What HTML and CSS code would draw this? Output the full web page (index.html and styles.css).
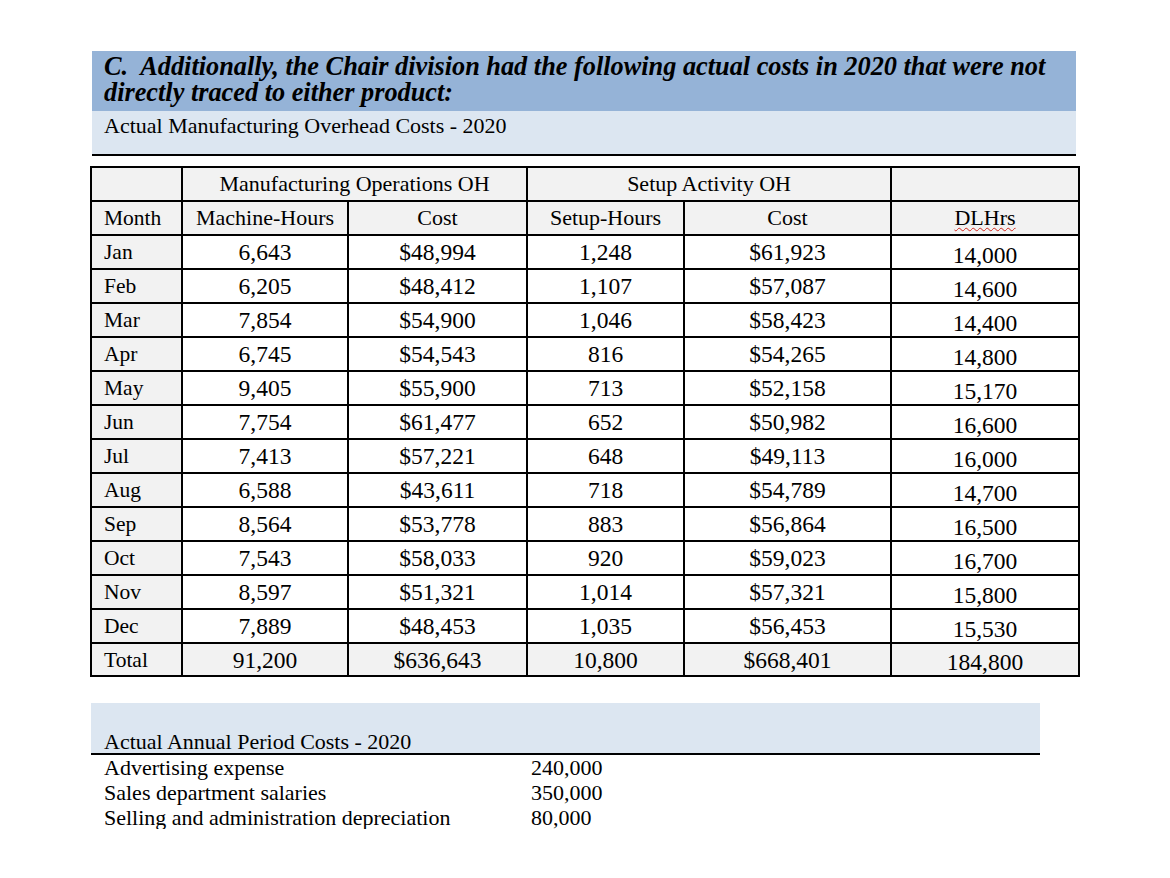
FILE: index.html
```html
<!DOCTYPE html>
<html>
<head>
<meta charset="utf-8">
<link rel="stylesheet" href="styles.css">
</head>
<body>
<div class="page">
  <div class="title-band">
    <p class="title">C.&nbsp; Additionally, the Chair division had the following actual costs in 2020 that were not directly traced to either product:</p>
  </div>
  <div class="sub-band">Actual Manufacturing Overhead Costs - 2020</div>

  <table class="oh">
    <colgroup>
      <col class="c-month"><col class="c-mh"><col class="c-cost1"><col class="c-sh"><col class="c-cost2"><col class="c-dl">
    </colgroup>
    <thead>
      <tr class="h1">
        <th class="lbl"></th>
        <th colspan="2">Manufacturing Operations OH</th>
        <th colspan="2">Setup Activity OH</th>
        <th></th>
      </tr>
      <tr class="h2">
        <th class="lbl">Month</th>
        <th>Machine-Hours</th>
        <th>Cost</th>
        <th>Setup-Hours</th>
        <th>Cost</th>
        <th><span class="squiggle">DLHrs</span></th>
      </tr>
    </thead>
    <tbody>
      <tr><td class="lbl">Jan</td><td>6,643</td><td>$48,994</td><td>1,248</td><td>$61,923</td><td class="dl">14,000</td></tr>
      <tr><td class="lbl">Feb</td><td>6,205</td><td>$48,412</td><td>1,107</td><td>$57,087</td><td class="dl">14,600</td></tr>
      <tr><td class="lbl">Mar</td><td>7,854</td><td>$54,900</td><td>1,046</td><td>$58,423</td><td class="dl">14,400</td></tr>
      <tr><td class="lbl">Apr</td><td>6,745</td><td>$54,543</td><td>816</td><td>$54,265</td><td class="dl">14,800</td></tr>
      <tr><td class="lbl">May</td><td>9,405</td><td>$55,900</td><td>713</td><td>$52,158</td><td class="dl">15,170</td></tr>
      <tr><td class="lbl">Jun</td><td>7,754</td><td>$61,477</td><td>652</td><td>$50,982</td><td class="dl">16,600</td></tr>
      <tr><td class="lbl">Jul</td><td>7,413</td><td>$57,221</td><td>648</td><td>$49,113</td><td class="dl">16,000</td></tr>
      <tr><td class="lbl">Aug</td><td>6,588</td><td>$43,611</td><td>718</td><td>$54,789</td><td class="dl">14,700</td></tr>
      <tr><td class="lbl">Sep</td><td>8,564</td><td>$53,778</td><td>883</td><td>$56,864</td><td class="dl">16,500</td></tr>
      <tr><td class="lbl">Oct</td><td>7,543</td><td>$58,033</td><td>920</td><td>$59,023</td><td class="dl">16,700</td></tr>
      <tr><td class="lbl">Nov</td><td>8,597</td><td>$51,321</td><td>1,014</td><td>$57,321</td><td class="dl">15,800</td></tr>
      <tr><td class="lbl">Dec</td><td>7,889</td><td>$48,453</td><td>1,035</td><td>$56,453</td><td class="dl">15,530</td></tr>
      <tr class="total"><td class="lbl">Total</td><td>91,200</td><td>$636,643</td><td>10,800</td><td>$668,401</td><td class="dl">184,800</td></tr>
    </tbody>
  </table>

  <div class="period">
    <div class="period-band"><span class="period-title">Actual Annual Period Costs - 2020</span></div>
    <div class="period-list">
      <div class="item"><span class="name">Advertising expense</span><span class="amt">240,000</span></div>
      <div class="item"><span class="name">Sales department salaries</span><span class="amt">350,000</span></div>
      <div class="item"><span class="name">Selling and administration depreciation</span><span class="amt">80,000</span></div>
    </div>
  </div>
</div>
</body>
</html>
```

FILE: styles.css
```css
html, body {
  margin: 0;
  padding: 0;
  background: #ffffff;
}
body {
  font-family: "Liberation Serif", "Times New Roman", serif;
  color: #000;
}
.page {
  width: 1170px;
  height: 878px;
  overflow: hidden;
  padding: 51px 0 0 90px;
  box-sizing: border-box;
}
.title-band {
  margin-left: 2px;
  width: 984px;
  height: 60px;
  background: #95b3d7;
  box-sizing: border-box;
  padding: 3px 0 0 12px;
}
.title {
  margin: 0;
  font-size: 26.3px;
  line-height: 26px;
  font-weight: bold;
  font-style: italic;
}
.sub-band {
  margin-left: 2px;
  width: 984px;
  height: 45px;
  background: #dce6f1;
  border-bottom: 2px solid #000;
  box-sizing: border-box;
  padding: 1px 0 0 12px;
  font-size: 22px;
  line-height: 28px;
}
table.oh {
  margin-top: 10px;
  border-collapse: collapse;
  table-layout: fixed;
  width: 988px;
  border: 2px solid #000;
}
.c-month { width: 91px; }
.c-mh { width: 166px; }
.c-cost1 { width: 179px; }
.c-sh { width: 157px; }
.c-cost2 { width: 207px; }
.c-dl { width: 188px; }
table.oh th, table.oh td {
  border: 2px solid #000;
  padding: 0;
  text-align: center;
  vertical-align: middle;
  font-weight: normal;
}
table.oh th {
  background: #f2f2f2;
  font-size: 22px;
  height: 32px;
  line-height: 26px;
}
table.oh tr.h1 th {
  height: 32px;
}
table.oh td {
  font-size: 23.5px;
  height: 32px;
  line-height: 28px;
  background: #fff;
}
table.oh .lbl {
  text-align: left;
  padding-left: 12px;
  background: #f2f2f2;
  font-size: 21.5px;
}
table.oh td.dl {
  padding-top: 5px;
  height: 27px;
  line-height: 26px;
}
table.oh tr.total td {
  background: #f2f2f2;
}
table.oh tr.total td:not(.dl) {
  height: 31px;
}
table.oh tr.total td.dl {
  height: 26px;
}
.squiggle {
  text-decoration: underline wavy #d0281e;
  text-decoration-thickness: 1px;
  text-underline-offset: 2px;
}
.period {
  margin-top: 26px;
}
.period-band {
  margin-left: 1px;
  width: 949px;
  height: 52px;
  background: #dce6f1;
  border-bottom: 2px solid #000;
  box-sizing: border-box;
  display: flex;
  align-items: flex-end;
  padding-left: 13px;
}
.period-title {
  font-size: 22px;
  line-height: 24px;
  margin-bottom: -1px;
}
.period-list {
  padding-left: 14px;
  height: 74px;
  overflow: hidden;
}
.item {
  display: grid;
  grid-template-columns: 427px auto;
  font-size: 22px;
  line-height: 25px;
}
```
